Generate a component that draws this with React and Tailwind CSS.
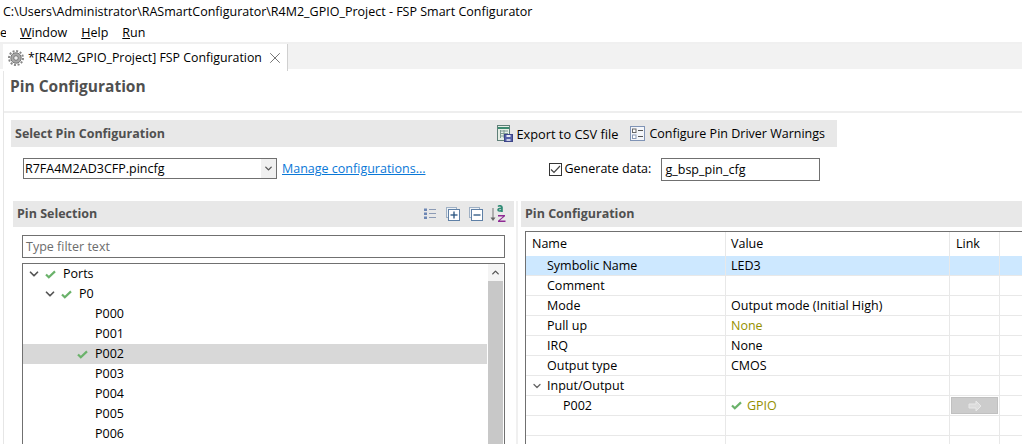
import { ChevronDown, ChevronUp, X } from "lucide-react";

const ui = "font-['Open_Sans','Noto_Sans',sans-serif]";

const treeRows = [
  { label: "Ports", indent: 0, arrow: true, check: true },
  { label: "P0", indent: 16, arrow: true, check: true },
  { label: "P000", indent: 32 },
  { label: "P001", indent: 32 },
  { label: "P002", indent: 32, check: true, selected: true },
  { label: "P003", indent: 32 },
  { label: "P004", indent: 32 },
  { label: "P005", indent: 32 },
  { label: "P006", indent: 32 },
];

const tableRows = [
  { name: "Symbolic Name", value: "LED3", selected: true },
  { name: "Comment", value: "" },
  { name: "Mode", value: "Output mode (Initial High)" },
  { name: "Pull up", value: "None", olive: true },
  { name: "IRQ", value: "None" },
  { name: "Output type", value: "CMOS" },
  { name: "Input/Output", value: "", arrow: true },
  { name: "P002", value: "GPIO", olive: true, check: true, link: true, deep: true },
  { name: "", value: "" },
  { name: "", value: "" },
];

function Check({ className = "" }) {
  return (
    <svg width="11" height="9" viewBox="0 0 11 9" className={className}>
      <path d="M1 4.5 L3.8 7.2 L10 1.4" fill="none" stroke="#6ab26a" strokeWidth="2.2" />
    </svg>
  );
}

function GearIcon() {
  return (
    <svg width="16" height="16" viewBox="0 0 16 16" className="shrink-0">
      <circle cx="8" cy="8" r="5.2" fill="#a9a9a9" stroke="#777" strokeWidth="1" />
      <circle cx="8" cy="8" r="7" fill="none" stroke="#888" strokeWidth="2" strokeDasharray="2 1.66" />
      <circle cx="8" cy="8" r="2.3" fill="#eee" stroke="#777" strokeWidth="1" />
    </svg>
  );
}

function ExportIcon() {
  return (
    <svg width="17" height="17" viewBox="0 0 17 17" className="shrink-0">
      <rect x="1.5" y="0.5" width="12" height="15" fill="#e6eee6" stroke="#5f7f78" />
      <path d="M2 3h11" stroke="#3d8a70" strokeWidth="2" />
      <path d="M4 6h8M4 8.5h8M4 11h5M4.5 5v8M8 5v8" stroke="#7f9a94" strokeWidth="1" />
      <rect x="8.5" y="9.5" width="8" height="7" fill="#5560a8" stroke="#3c4488" />
      <rect x="10.5" y="10" width="4" height="2" fill="#e9e9f5" />
      <rect x="10.5" y="14" width="4" height="2" fill="#c9cce6" />
    </svg>
  );
}

function WarningsIcon() {
  return (
    <svg width="15" height="15" viewBox="0 0 15 15" className="shrink-0">
      <rect x="0.5" y="0.5" width="14" height="14" fill="#f4f6fa" stroke="#7f93b5" />
      <rect x="2.5" y="3" width="3.5" height="3.5" fill="#fff" stroke="#666" />
      <rect x="2.5" y="9" width="3.5" height="3.5" fill="#fff" stroke="#8a9ab5" />
      <path d="M8 4.5h5M8 10.5h5" stroke="#555" strokeWidth="1" />
    </svg>
  );
}

function ListIcon() {
  return (
    <svg width="12" height="12" viewBox="0 0 12 12" className="shrink-0">
      <path d="M0 0.5h3v2.5H0zM0 4.5h3v2.5H0zM0 8.5h3v2.5H0z" fill="#6c86b4" />
      <path d="M5 1.5h7M5 5.5h7M5 9.5h7" stroke="#8c9bb5" strokeWidth="1" />
    </svg>
  );
}

function TreeBoxIcon({ plus }) {
  return (
    <svg width="14" height="14" viewBox="0 0 14 14" className="shrink-0">
      <rect x="0.5" y="0.5" width="10" height="10" fill="#eef2f6" stroke="#9fb0c4" />
      <rect x="2.5" y="2.5" width="11" height="11" fill="#fff" stroke="#5f80a6" />
      <path d="M4.5 8h7" stroke="#27527f" strokeWidth="1.3" />
      {plus && <path d="M8 4.5v7" stroke="#27527f" strokeWidth="1.3" />}
    </svg>
  );
}

function SortIcon() {
  return (
    <svg width="17" height="18" viewBox="0 0 17 18" className="shrink-0">
      <path d="M3 3v11" stroke="#777" strokeWidth="1" />
      <path d="M0.5 12.5h5L3 16z" fill="#666" />
      <path d="M8 1.5c1-1 4-1 4 .8V7M12 3.5c-3-.4-4 .4-4 1.4 0 1.4 3 1.4 4 .2" fill="none" stroke="#2c8a73" strokeWidth="1.6" />
      <path d="M8 10h7v1.3L9.8 15.5H15.5V17H8v-1.3L13 11.5H8z" fill="#8f2a94" />
    </svg>
  );
}

function SectionBar({ title, className = "", children }) {
  return (
    <div className={`flex items-center justify-between bg-[#e8e8e8] ${className}`}>
      <span className="text-[12.5px] font-bold text-[#505050]">{title}</span>
      {children}
    </div>
  );
}

export default function App() {
  return (
    <div className={`${ui} h-[444px] w-[1022px] overflow-hidden bg-white text-[12.5px] leading-[20px] text-black`}>
      <div className="h-[22px] pl-[3px] pt-[1px] leading-[22px]">
        C:\Users\Administrator\RASmartConfigurator\R4M2_GPIO_Project - FSP Smart Configurator
      </div>
      <div className="flex h-[20px] gap-[14px] pt-[1px] leading-[20px]">
        <span className="w-[6px] overflow-hidden">e</span>
        <span><u>W</u>indow</span>
        <span><u>H</u>elp</span>
        <span><u>R</u>un</span>
      </div>

      <div className="flex h-[27px] border-t-2 border-[#f0f0f0] bg-[#f2f2f2] pl-[3px]">
        <div className="flex h-[27px] w-[285px] items-center gap-[4px] border-r border-[#d0d0d0] bg-white pl-[5px]">
          <GearIcon />
          <span className="whitespace-nowrap text-[12.35px]">*[R4M2_GPIO_Project] FSP Configuration</span>
          <X size={18} strokeWidth={0.9} className="shrink-0 text-[#333]" />
        </div>
      </div>

      <div className="ml-[3px] h-[375px] border-l border-[#e6e6e6]">
        <div className="h-[42px] pl-[6px] pt-[6px] text-[15.5px] font-bold leading-[22px] text-[#505050]">
          Pin Configuration
        </div>
        <div className="h-[2px] bg-[#eeeeee]" />

        <SectionBar title="Select Pin Configuration" className="ml-[7px] mt-[7px] h-[27px] w-[826px] pl-[4px]">
          <div className="flex items-center">
            <ExportIcon />
            <span className="ml-[3px] mr-[12px] w-[102px] whitespace-nowrap text-[12.8px]">Export to CSV file</span>
            <WarningsIcon />
            <span className="ml-[4px] mr-[12px]">Configure Pin Driver Warnings</span>
          </div>
        </SectionBar>

        <div className="flex h-[54px] items-start pt-[11px]">
          <div className="ml-[19px] flex h-[21px] w-[254px] items-center justify-between border border-[#707070] pl-[1px]">
            <span>R7FA4M2AD3CFP.pincfg</span>
            <div className="flex h-full w-[15px] items-center justify-center bg-[#f0f0f0]">
              <ChevronDown size={11} strokeWidth={3} className="text-[#555]" />
            </div>
          </div>
          <span className="ml-[5px] pt-[1px] text-[#0a78d7] underline">Manage configurations...</span>
          <div className="ml-[123px] flex items-center pt-[1px]">
            <div className="flex h-[13px] w-[13px] items-center justify-center border border-[#333]">
              <svg width="11" height="9" viewBox="0 0 11 9">
                <path d="M1 4.5 L4 7.5 L10 1" fill="none" stroke="#444" strokeWidth="1.2" />
              </svg>
            </div>
            <span className="ml-[3px] w-[86px] whitespace-nowrap">Generate data:</span>
          </div>
          <div className="ml-[10px] flex h-[23px] w-[159px] items-center border border-[#707070] pl-[4px]">
            g_bsp_pin_cfg
          </div>
        </div>

        <div className="flex">
          <div className="ml-[9px] w-[501px]">
            <SectionBar title="Pin Selection" className="h-[26px] pl-[4px] pr-[7px]">
              <div className="flex items-center">
                <ListIcon />
                <div className="ml-[10px]"><TreeBoxIcon plus /></div>
                <div className="ml-[9px]"><TreeBoxIcon /></div>
                <div className="ml-[7px]"><SortIcon /></div>
              </div>
            </SectionBar>
            <div className="ml-[9px] mt-[8px] flex h-[23px] w-[483px] items-center border border-[#707070] pl-[3px] text-[#6d6d6d]">
              Type filter text
            </div>
            <div className="ml-[9px] mt-[5px] flex h-[190px] w-[483px] border border-[#707070]">
              <div className="flex-1">
                {treeRows.map((row) => (
                  <div
                    key={row.label}
                    className={`h-[20px] leading-[20px] ${row.selected ? "bg-[#d8d8d8]" : ""}`}
                  >
                    <div className="flex h-full items-center" style={{ paddingLeft: row.indent + 3 }}>
                      <div className="flex w-[16px] justify-center">
                        {row.arrow && <ChevronDown size={14} strokeWidth={3} className="text-[#555]" />}
                      </div>
                      <div className="flex w-[16px] justify-center">
                        {row.check && <Check />}
                      </div>
                      <span className="ml-[5px]">{row.label}</span>
                    </div>
                  </div>
                ))}
              </div>
              <div className="ml-[1px] mr-[1px] w-[15px] bg-[#c8c8c8]">
                <div className="flex h-[17px] items-center justify-center bg-[#f4f4f4]">
                  <ChevronUp size={11} strokeWidth={3} className="text-[#555]" />
                </div>
              </div>
            </div>
          </div>

          <div className="ml-[2px] w-[2px] bg-[#f0f0f0]" />

          <div className="ml-[3px] flex-1">
            <SectionBar title="Pin Configuration" className="h-[26px] pl-[4px]" />
            <div className="ml-[4px] mt-[4px] border-l border-t border-[#707070]">
              <div className="flex h-[24px] items-center">
                <div className="h-full w-[200px] border-r border-[#e8e8e8] pl-[6px] leading-[24px]">Name</div>
                <div className="h-full w-[224px] border-r border-[#e8e8e8] pl-[5px] leading-[24px]">Value</div>
                <div className="h-full w-[50px] border-r border-[#e8e8e8] pl-[6px] leading-[24px]">Link</div>
              </div>
              {tableRows.map((row, i) => (
                <div
                  key={row.name + i}
                  className={`flex h-[20px] border-b border-[#e8e8e8] leading-[19px] ${row.selected ? "bg-[#cde8ff]" : ""}`}
                >
                  <div className="flex w-[200px] border-r border-[#e8e8e8]">
                    <div className={`flex items-center justify-center ${row.deep ? "w-[37px]" : "w-[21px]"}`}>
                      {row.arrow && <ChevronDown size={12} strokeWidth={2.6} className="text-[#666]" />}
                    </div>
                    <span>{row.name}</span>
                  </div>
                  <div className={`flex w-[224px] items-center border-r border-[#e8e8e8] pl-[5px] ${row.olive ? "text-[#958f00]" : ""}`}>
                    {row.check && <Check className="mr-[5px]" />}
                    {row.value}
                  </div>
                  <div className="flex w-[50px] items-center justify-center border-r border-[#e8e8e8]">
                    {row.link && (
                      <div className="flex h-[17px] w-[47px] items-center justify-center border border-[#c0c0c0] bg-[#cccccc]">
                        <svg width="14" height="12" viewBox="0 0 14 12">
                          <path d="M1 4h7V1l5 5-5 5V8H1z" fill="#dcdcdc" stroke="#e8e8e8" />
                        </svg>
                      </div>
                    )}
                  </div>
                </div>
              ))}
            </div>
          </div>
        </div>
      </div>
    </div>
  );
}
